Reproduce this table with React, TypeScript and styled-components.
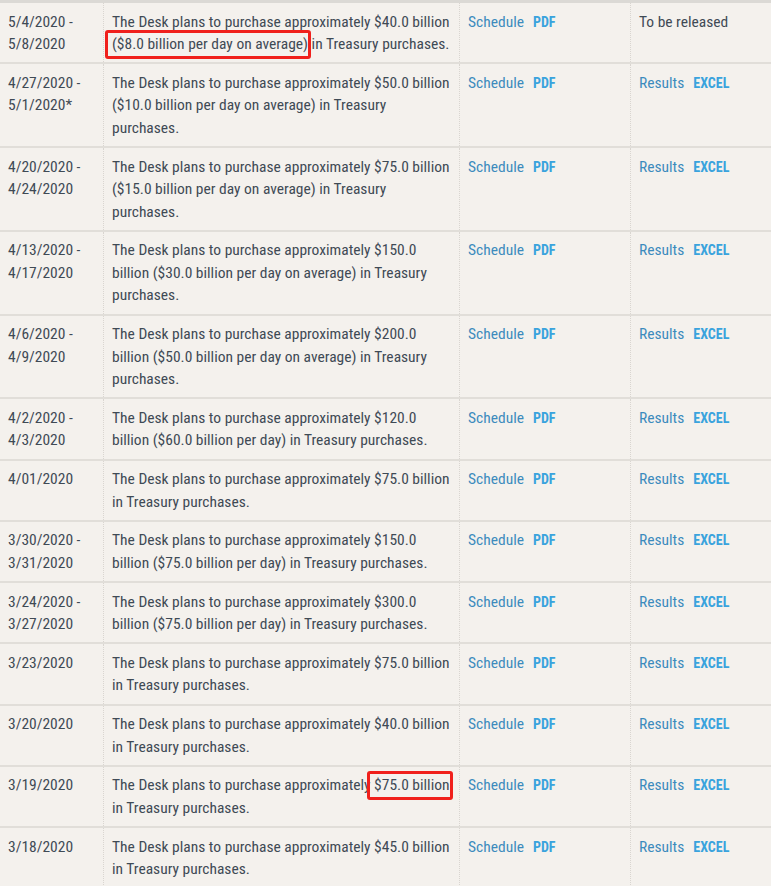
import React from 'react';
import styled, { createGlobalStyle } from 'styled-components';

const GlobalStyle = createGlobalStyle`
    html, body {
        margin: 0;
        padding: 0;
        background: #f4f1ed;
    }
    body {
        font-family: 'Roboto Condensed', 'Roboto', 'Liberation Sans', sans-serif;
        font-stretch: condensed;
    }
`;

type Row = {
    date: string;
    text: React.ReactNode;
    released: boolean;
};

const Page = styled.div`
    border-top: 3px solid #dbd9d5;
    width: 771px;
    overflow: hidden;
`;

const TableStyle = styled.table`
    width: 771px;
    border-collapse: collapse;
    table-layout: fixed;
`;

const Tr = styled.tr`
    border-bottom: 2px solid #e1ded9;
`;

const Td = styled.td<{ $width: number }>`
    width: ${(props) => props.$width - 16}px;
    vertical-align: top;
    padding: 7.5px 8px 6.75px 8px;
    font-size: 15.5px;
    line-height: 22.5px;
    color: #3f4a55;
    & + & {
        border-left: 1px dotted #d9d5d0;
    }
`;

const LinkText = styled.span`
    color: #3c8bbd;
`;

const Tag = styled.span`
    color: #3aa3dd;
    font-weight: 700;
    font-size: 14px;
    margin-left: 9px;
`;

const Marked = styled.span`
    position: relative;
    &::after {
        content: '';
        position: absolute;
        left: -7px;
        right: -3px;
        top: -5px;
        bottom: -6px;
        border: 3px solid #f0201c;
        border-radius: 3px;
    }
`;

const rows: Row[] = [
    {
        date: '5/4/2020 - 5/8/2020',
        text: (
            <>
                The Desk plans to purchase approximately $40.0 billion <Marked>($8.0 billion per day on average)</Marked> in
                Treasury purchases.
            </>
        ),
        released: false,
    },
    {
        date: '4/27/2020 - 5/1/2020*',
        text: 'The Desk plans to purchase approximately $50.0 billion ($10.0 billion per day on average) in Treasury purchases.',
        released: true,
    },
    {
        date: '4/20/2020 - 4/24/2020',
        text: 'The Desk plans to purchase approximately $75.0 billion ($15.0 billion per day on average) in Treasury purchases.',
        released: true,
    },
    {
        date: '4/13/2020 - 4/17/2020',
        text: 'The Desk plans to purchase approximately $150.0 billion ($30.0 billion per day on average) in Treasury purchases.',
        released: true,
    },
    {
        date: '4/6/2020 - 4/9/2020',
        text: 'The Desk plans to purchase approximately $200.0 billion ($50.0 billion per day on average) in Treasury purchases.',
        released: true,
    },
    {
        date: '4/2/2020 - 4/3/2020',
        text: 'The Desk plans to purchase approximately $120.0 billion ($60.0 billion per day) in Treasury purchases.',
        released: true,
    },
    {
        date: '4/01/2020',
        text: 'The Desk plans to purchase approximately $75.0 billion in Treasury purchases.',
        released: true,
    },
    {
        date: '3/30/2020 - 3/31/2020',
        text: 'The Desk plans to purchase approximately $150.0 billion ($75.0 billion per day) in Treasury purchases.',
        released: true,
    },
    {
        date: '3/24/2020 - 3/27/2020',
        text: 'The Desk plans to purchase approximately $300.0 billion ($75.0 billion per day) in Treasury purchases.',
        released: true,
    },
    {
        date: '3/23/2020',
        text: 'The Desk plans to purchase approximately $75.0 billion in Treasury purchases.',
        released: true,
    },
    {
        date: '3/20/2020',
        text: 'The Desk plans to purchase approximately $40.0 billion in Treasury purchases.',
        released: true,
    },
    {
        date: '3/19/2020',
        text: (
            <>
                The Desk plans to purchase approximately <Marked>$75.0 billion</Marked> in Treasury purchases.
            </>
        ),
        released: true,
    },
    {
        date: '3/18/2020',
        text: 'The Desk plans to purchase approximately $45.0 billion in Treasury purchases.',
        released: true,
    },
];

export default function App(): JSX.Element {
    return (
        <>
            <GlobalStyle />
            <Page>
                <TableStyle>
                    <tbody>
                        {rows.map((row) => (
                            <Tr key={row.date}>
                                <Td $width={103}>{row.date}</Td>
                                <Td $width={355}>{row.text}</Td>
                                <Td $width={170}>
                                    <LinkText>Schedule</LinkText>
                                    <Tag>PDF</Tag>
                                </Td>
                                <Td $width={143}>
                                    {row.released ? (
                                        <>
                                            <LinkText>Results</LinkText>
                                            <Tag>EXCEL</Tag>
                                        </>
                                    ) : (
                                        'To be released'
                                    )}
                                </Td>
                            </Tr>
                        ))}
                    </tbody>
                </TableStyle>
            </Page>
        </>
    );
}
